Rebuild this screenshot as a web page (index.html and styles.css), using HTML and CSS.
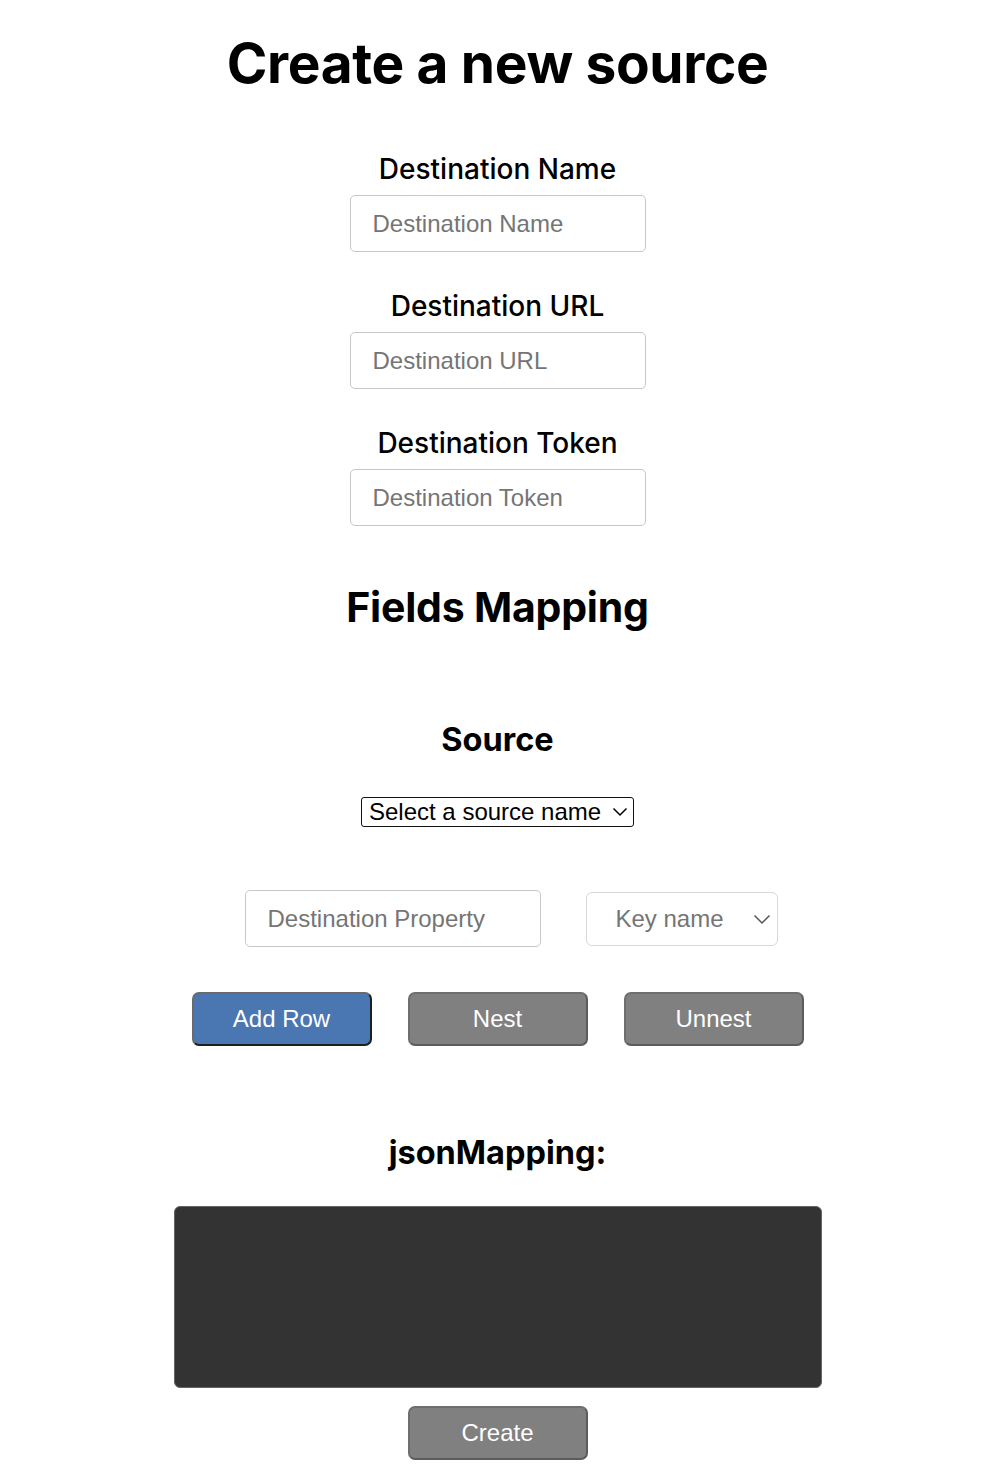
FILE: index.html
```html
<!DOCTYPE html>
<html lang="en">
<head>
<meta charset="utf-8">
<title>Create a new source</title>
<link rel="stylesheet" href="styles.css">
</head>
<body>
<main class="page">
  <h1 class="title">Create a new source</h1>

  <div class="field">
    <label class="field-label" for="dn">Destination Name</label>
    <input class="text-input" id="dn" type="text" placeholder="Destination Name">
  </div>
  <div class="field">
    <label class="field-label" for="du">Destination URL</label>
    <input class="text-input" id="du" type="text" placeholder="Destination URL">
  </div>
  <div class="field">
    <label class="field-label" for="dt">Destination Token</label>
    <input class="text-input" id="dt" type="text" placeholder="Destination Token">
  </div>

  <h2 class="section-title">Fields Mapping</h2>
  <h3 class="sub-title source-title">Source</h3>

  <div class="select-wrap source-select-wrap">
    <select class="source-select">
      <option>Select a source name</option>
    </select>
    <svg class="chev" width="16" height="10" viewBox="0 0 16 10"><path d="M1.5 1.5 L8 8 L14.5 1.5" fill="none" stroke="#000" stroke-width="1.5"/></svg>
  </div>

  <div class="map-row">
    <input class="text-input prop-input" type="text" placeholder="Destination Property">
    <div class="select-wrap key-select-wrap">
      <select class="key-select">
        <option>Key name</option>
      </select>
      <svg class="chev key-chev" width="18" height="11" viewBox="0 0 18 11"><path d="M1.5 1.5 L9 9 L16.5 1.5" fill="none" stroke="#555" stroke-width="1.5"/></svg>
    </div>
  </div>

  <div class="btn-row">
    <button class="btn btn-primary" type="button">Add Row</button>
    <button class="btn" type="button">Nest</button>
    <button class="btn" type="button">Unnest</button>
  </div>

  <h3 class="sub-title json-title">jsonMapping:</h3>
  <div class="json-box"></div>

  <button class="btn create-btn" type="button">Create</button>
</main>
</body>
</html>
```

FILE: styles.css
```css
html, body {
  margin: 0;
  padding: 0;
  background: #fff;
}

body {
  font-family: Inter, "Noto Sans", sans-serif;
  color: #000;
}

.page {
  width: 995px;
  display: flex;
  flex-direction: column;
  align-items: center;
  padding-top: 29px;
  padding-bottom: 12px;
}

.title {
  margin: 0;
  font-size: 55px;
  line-height: 68px;
  font-weight: 700;
  letter-spacing: -0.35px;
}

.field {
  display: flex;
  flex-direction: column;
  align-items: center;
  margin-top: 38px;
}

.title + .field {
  margin-top: 56px;
}

.field-label {
  font-size: 28px;
  line-height: 32px;
  font-weight: 500;
  margin-bottom: 10px;
}

.text-input {
  box-sizing: border-box;
  width: 296px;
  height: 57px;
  border: 1px solid #c8c8c8;
  border-radius: 5px;
  padding: 0 22px;
  font-family: "Liberation Sans", Arial, sans-serif;
  font-size: 24px;
  color: #222;
  background: #fff;
  outline: none;
}

.text-input::placeholder {
  color: #757575;
}

.section-title {
  margin: 55px 0 0;
  font-size: 41px;
  line-height: 52px;
  font-weight: 700;
  letter-spacing: -0.2px;
}

.sub-title {
  margin: 0;
  font-size: 32.5px;
  line-height: 40px;
  font-weight: 700;
}

.source-title {
  margin-top: 87px;
}

.select-wrap {
  position: relative;
  display: flex;
}

.select-wrap select {
  appearance: none;
  -webkit-appearance: none;
  margin: 0;
  outline: none;
  background: #fff;
}

.chev {
  position: absolute;
  top: 50%;
  pointer-events: none;
}

.source-select-wrap {
  margin-top: 37px;
}

.source-select {
  box-sizing: border-box;
  width: 273px;
  height: 30px;
  border: 1px solid #111;
  border-radius: 3px;
  padding: 0 0 0 7px;
  font-family: "Liberation Sans", Arial, sans-serif;
  font-size: 24px;
  line-height: 28px;
  color: #000;
}

.source-select-wrap .chev {
  right: 6px;
  margin-top: -5px;
}

.map-row {
  display: flex;
  align-items: center;
  gap: 45px;
  margin-top: 63px;
  padding-left: 27px;
}

.key-select {
  box-sizing: border-box;
  width: 192px;
  height: 54px;
  border: 1px solid #d8d8d8;
  border-radius: 6px;
  padding: 0 0 0 29px;
  font-family: "Liberation Sans", Arial, sans-serif;
  font-size: 24px;
  color: #757575;
}

.key-select-wrap .chev {
  right: 7px;
  margin-top: -5px;
}

.btn-row {
  display: flex;
  gap: 36px;
  margin-top: 45px;
}

.btn {
  box-sizing: border-box;
  width: 180px;
  height: 54px;
  margin: 0;
  padding: 0;
  border: 2px solid;
  border-color: #6e6e6e #5c5c5c #5c5c5c #6e6e6e;
  border-radius: 7px;
  background: #808080;
  color: #fff;
  font-family: "Liberation Sans", Arial, sans-serif;
  font-size: 24px;
  cursor: pointer;
}

.btn-primary {
  background: #4a76b1;
  border-color: #6a6a6a #1e1e1e #1e1e1e #6a6a6a;
}

.json-title {
  margin-top: 87px;
}

.json-box {
  box-sizing: border-box;
  width: 648px;
  height: 182px;
  margin-top: 33px;
  background: #333;
  border: 1px solid #666;
  border-radius: 6px;
}

.create-btn {
  margin-top: 18px;
}
```
